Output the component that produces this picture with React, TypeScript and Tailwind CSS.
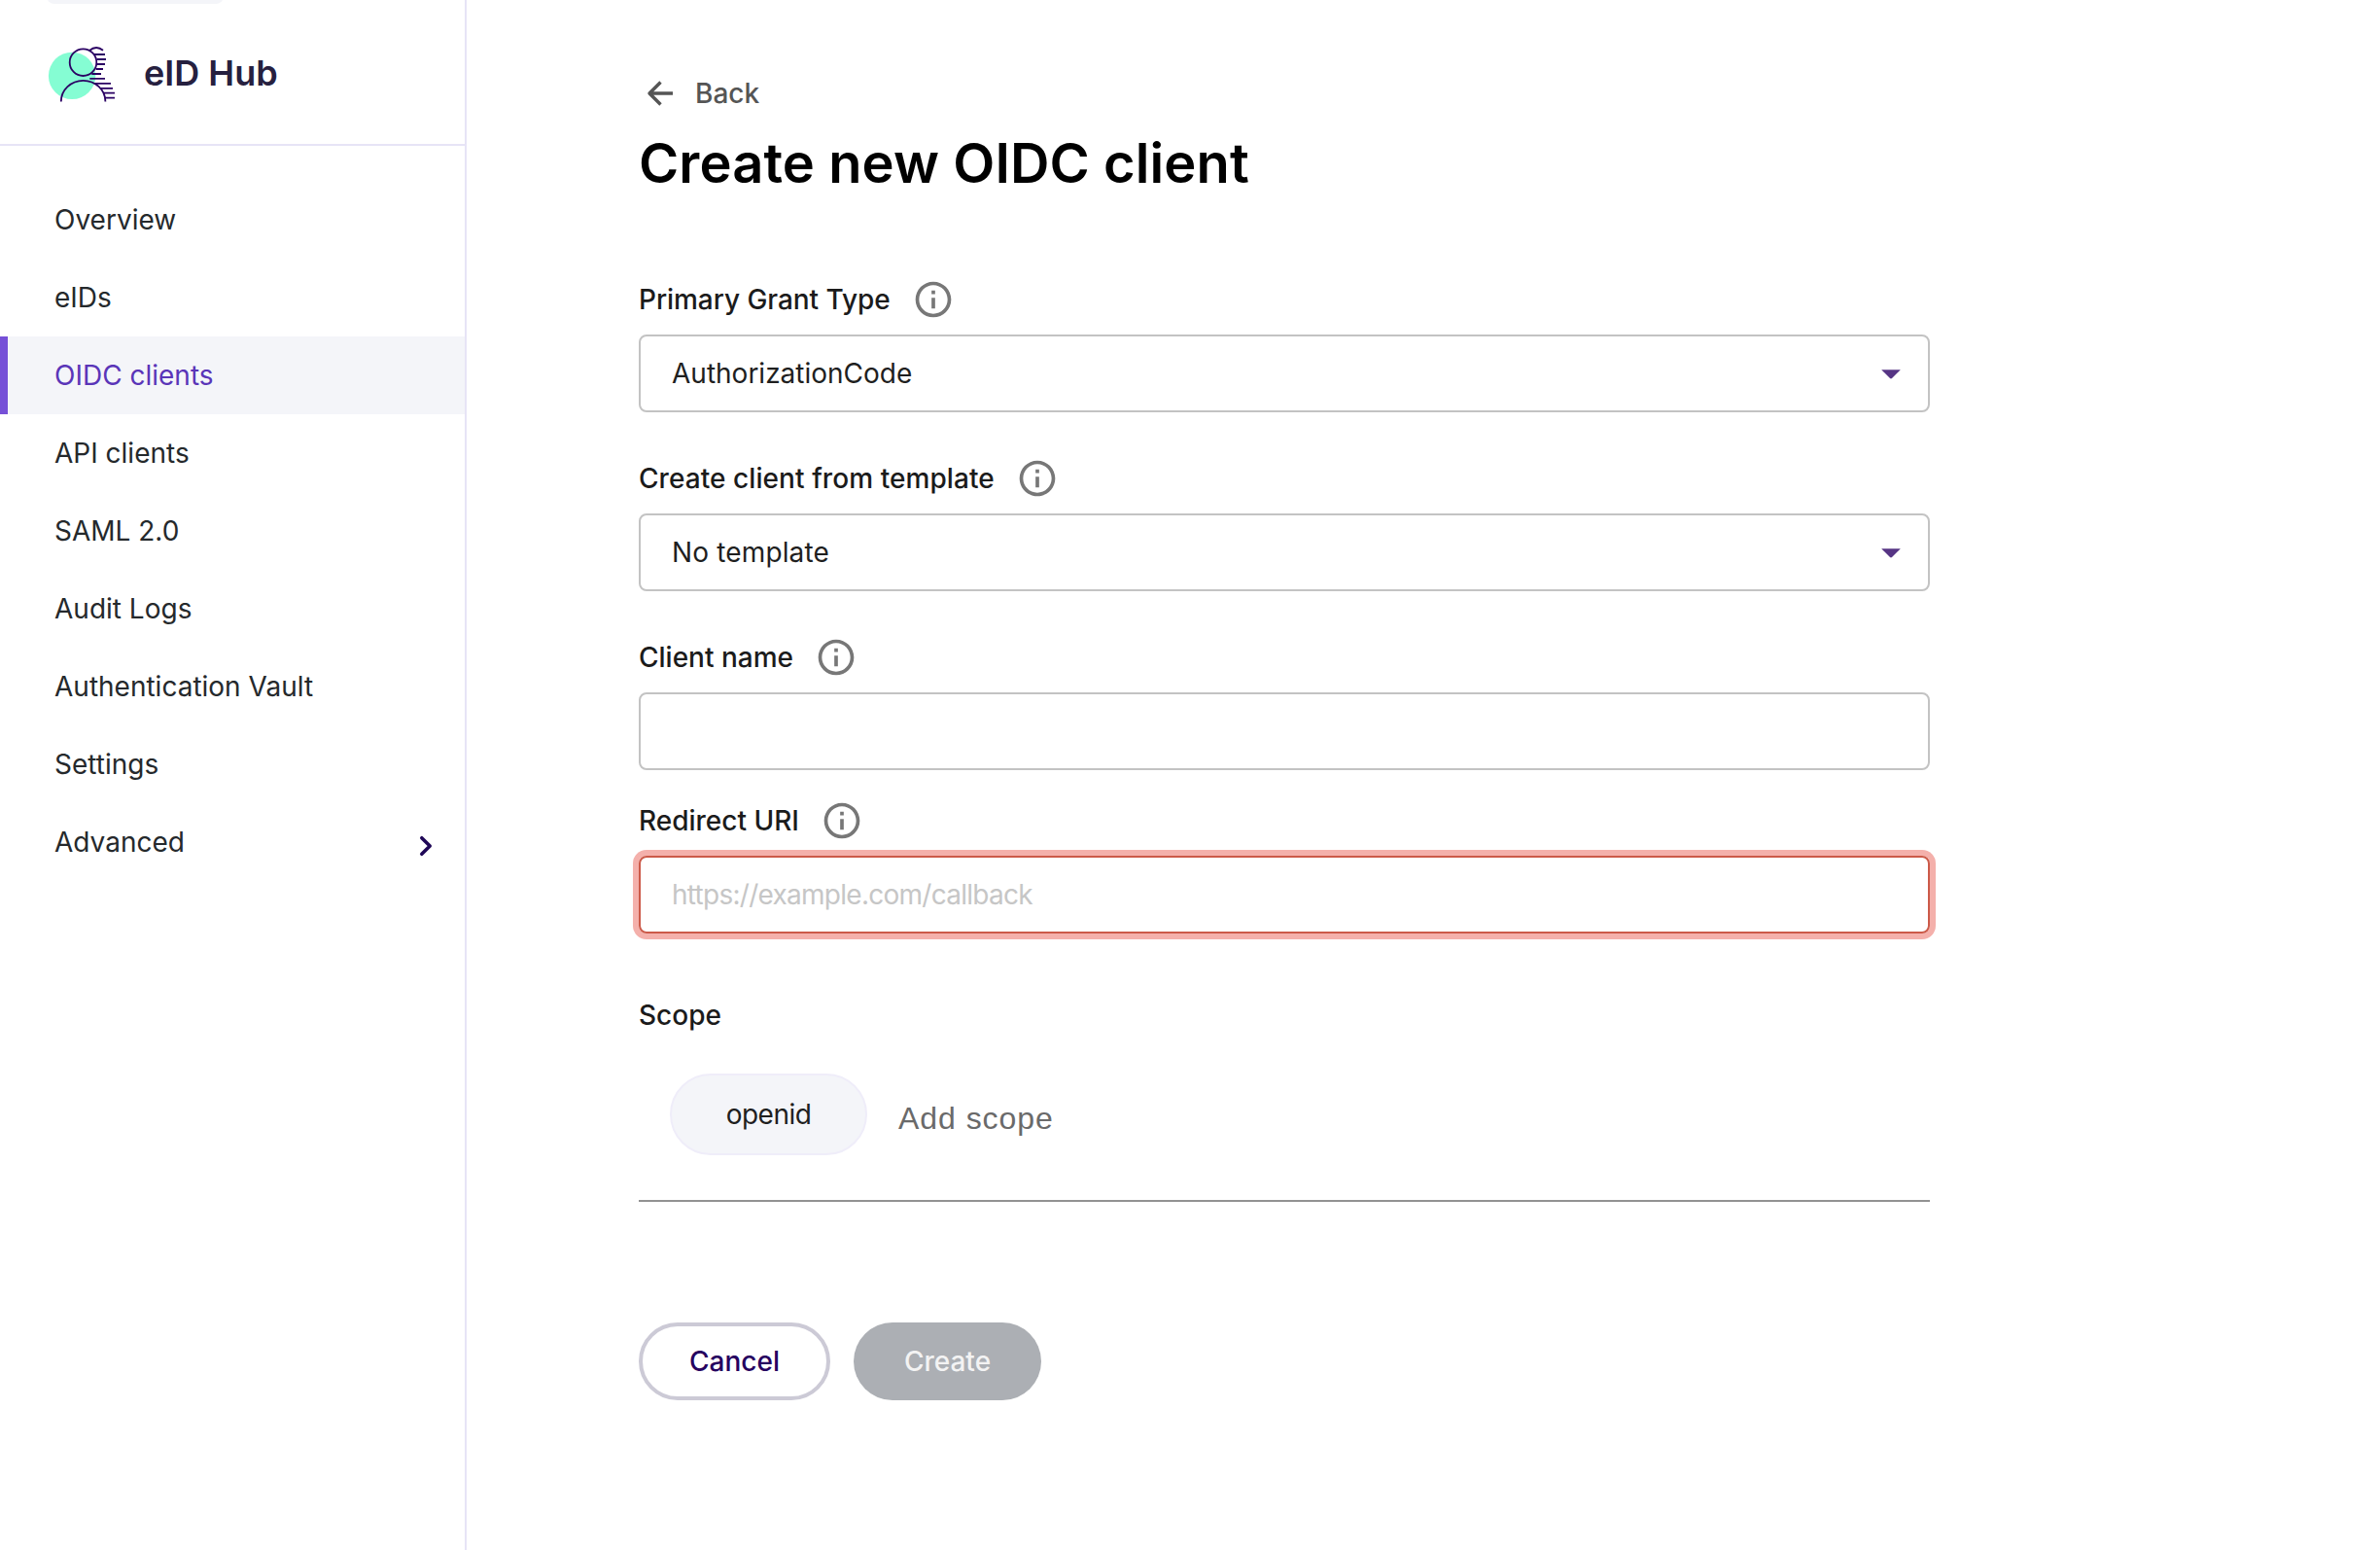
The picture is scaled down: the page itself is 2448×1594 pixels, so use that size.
import { ReactNode } from "react";

const navItems = [
  "Overview",
  "eIDs",
  "OIDC clients",
  "API clients",
  "SAML 2.0",
  "Audit Logs",
  "Authentication Vault",
  "Settings",
  "Advanced",
];

function Logo() {
  return (
    <svg width="76" height="64" viewBox="48 44 76 64" fill="none" className="shrink-0">
      <circle cx="74.1" cy="77.9" r="24.2" fill="#85fdd3" />
      <g stroke="#2a0063" strokeWidth="1.8">
        <circle cx="85.5" cy="64.2" r="13.8" />
        <path d="M62.8 104.4A22.8 21.6 0 0 1 108.4 104.4" />
        <path d="M92 52Q99 46 106 51.8" />
        <path d="M97 56H108M99.7 61H109M99.7 66H108M98.7 71H106M94.3 76H104M92.3 80.8H108M96.7 85.8H114M103.3 90.8H116M106.3 95.7H118M108.3 100.6H118" />
      </g>
    </svg>
  );
}

function InfoIcon() {
  return (
    <svg width="44" height="44" viewBox="0 0 24 24" fill="#777777" className="shrink-0">
      <path d="M11 7h2v2h-2zm0 4h2v6h-2zm1-9C6.48 2 2 6.48 2 12s4.48 10 10 10 10-4.48 10-10S17.52 2 12 2zm0 18c-4.41 0-8-3.59-8-8s3.59-8 8-8 8 3.59 8 8-3.59 8-8 8z" />
    </svg>
  );
}

function Label({ children, className = "" }: { children: ReactNode; className?: string }) {
  return (
    <div className="flex h-11 items-center gap-[22px] font-medium text-[#1b1b1b]">
      <span className={className}>{children}</span>
      <InfoIcon />
    </div>
  );
}

function Select({ value, className = "" }: { value: string; className?: string }) {
  return (
    <div className="mt-3.5 flex h-20 items-center justify-between rounded-lg border-2 border-[#c3c3c3] pr-[28px] pl-8 text-[#1f1f1f]">
      <span className={className}>{value}</span>
      <svg width="20" height="10" viewBox="0 0 20 10" className="mt-px">
        <path d="M0.2 0.3H19.8L11 9.1Q10 9.8 9 9.1Z" fill="#563484" />
      </svg>
    </div>
  );
}

export default function App() {
  return (
    <div className="flex h-[1594px] w-[2448px] overflow-hidden bg-white font-['Inter',sans-serif] text-[28px] leading-10">
      <aside className="flex w-[480px] shrink-0 flex-col border-r-2 border-[#e7e4f6]">
        <div className="flex h-[150px] flex-col border-b-2 border-[#e7e4f6]">
          <div className="ml-12 flex h-1 w-[182px] items-end overflow-hidden">
            <div className="h-10 w-full shrink-0 rounded-lg bg-[#f4f5f9]" />
          </div>
          <div className="mt-10 ml-12 flex h-16 items-center gap-6">
            <Logo />
            <span className="-mt-0.5 text-4xl font-semibold text-[#26203f]">eID Hub</span>
          </div>
        </div>
        <nav className="mt-9 flex flex-col">
          {navItems.map((item) => (
            <a
              key={item}
              className={
                item === "OIDC clients"
                  ? "flex h-20 items-center border-l-8 border-[#7650d7] bg-[#f4f5f9] pl-12 text-[#5a35b8]"
                  : "flex h-20 items-center justify-between pr-8 pl-14 text-[#25292c]"
              }
            >
              <span>{item}</span>
              {item === "Advanced" && (
                <svg width="16" height="24" viewBox="0 0 16 24" fill="none" className="mt-2">
                  <path
                    d="M3.8 3.7L12.2 12L3.8 20.3"
                    stroke="#1f0757"
                    strokeWidth="3.6"
                    strokeLinecap="round"
                    strokeLinejoin="round"
                  />
                </svg>
              )}
            </a>
          ))}
        </nav>
      </aside>

      <main className="ml-[177px] flex w-[1328px] flex-col pt-[76px]">
        <a className="flex h-10 items-center font-medium text-[#555555]">
          <svg width="40" height="40" viewBox="0 0 40 40" fill="none" className="ml-0.5 shrink-0">
            <path
              d="M20.5 8.5L9 20L20.5 31.5M9.5 20H33"
              stroke="#555555"
              strokeWidth="3.4"
              strokeLinejoin="round"
            />
          </svg>
          <span className="ml-4">Back</span>
        </a>
        <h1 className="mt-5 text-[56px] leading-[64px] font-semibold tracking-[0.1px] text-black">
          Create new OIDC client
        </h1>

        <div className="mt-[86px]">
          <Label className="tracking-[-0.05px]">Primary Grant Type</Label>
          <Select value="AuthorizationCode" />
        </div>
        <div className="mt-[46px]">
          <Label className="tracking-[0.07px]">Create client from template</Label>
          <Select value="No template" className="tracking-[0.15px]" />
        </div>
        <div className="mt-[46px]">
          <Label>Client name</Label>
          <div className="mt-3.5 h-20 rounded-lg border-2 border-[#c3c3c3]" />
        </div>
        <div className="mt-[30px]">
          <Label>Redirect URI</Label>
          <div className="mt-3.5 flex h-20 items-center rounded-lg border-2 border-[#cc5a49] pl-8 tracking-[-0.73px] text-[#c6c6c6] shadow-[0_0_0_6px_#f4b0ab]">
            https://example.com/callback
          </div>
        </div>

        <div className="mt-16 font-medium text-[#1b1b1b]">Scope</div>
        <div className="mt-10 flex h-[132px] items-start border-b-2 border-[#929292] pl-8">
          <span className="flex h-[84px] w-[203px] items-center justify-center rounded-full border-2 border-[#efedf9] bg-[#f4f5f9] tracking-[-0.5px] text-[#1f1f1f]">
            openid
          </span>
          <span className="mt-[26px] ml-8 font-['Liberation_Sans',sans-serif] text-[32px] tracking-[0.95px] text-[#6a6a6a]">
            Add scope
          </span>
        </div>

        <div className="mt-[124px] flex gap-6 font-medium">
          <button className="flex h-20 w-[197px] items-center justify-center rounded-full border-4 border-[#cccad6] text-[#26005f]">
            Cancel
          </button>
          <button className="flex h-20 w-[193px] items-center justify-center rounded-full bg-[#acafb4] text-[#f3f3f3]">
            Create
          </button>
        </div>
      </main>
    </div>
  );
}
